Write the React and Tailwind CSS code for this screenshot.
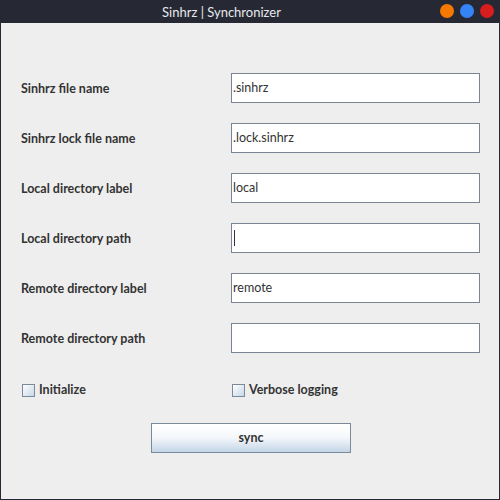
export default function App() {
  const rows = [
    ["Sinhrz file name", ".sinhrz"],
    ["Sinhrz lock file name", ".lock.sinhrz"],
    ["Local directory label", "local"],
    ["Local directory path", "", true],
    ["Remote directory label", "remote"],
    ["Remote directory path", ""],
  ];
  const font = { fontFamily: 'Lato, "Noto Sans", sans-serif' };
  return (
    <div className="w-[500px] h-[500px] flex flex-col bg-[#262833]" style={font}>
      <div className="h-[23px] flex items-center relative rounded-t-[6px] bg-[#262833]">
        <div className="w-[443px] text-center text-[13px] text-[#e6e8ee] leading-none pt-[1px]">
          Sinhrz | Synchronizer
        </div>
        <div className="absolute right-[6px] top-[4px] flex gap-[6px]">
          <div className="w-[14px] h-[14px] rounded-full bg-[#f57900]" />
          <div className="w-[14px] h-[14px] rounded-full bg-[#3584f6]" />
          <div className="w-[14px] h-[14px] rounded-full bg-[#d71d1d]" />
        </div>
      </div>
      <div className="flex-1 mx-[1px] mb-[1px] bg-[#eeeeee] flex flex-col pt-[50px] pl-[20px] pr-[19px]">
        <div className="flex flex-col gap-[20px]">
          {rows.map(([label, value, caret]) => (
            <div key={label} className="flex items-center h-[30px]">
              <div className="w-[210px] text-[12.5px] font-bold text-[#333333] pt-[3px]">{label}</div>
              <div className="w-[249px] h-[30px] bg-white border border-[#7a8593] flex items-center pl-[1px] text-[12.5px] text-[#333333]">
                {caret ? <span className="inline-block w-[1px] h-[16px] bg-[#333333] ml-[1px]" /> : value}
              </div>
            </div>
          ))}
        </div>
        <div className="flex items-center h-[20px] mt-[27px]">
          <div className="w-[211px] flex items-center pl-[1px]">
            <div className="w-[13px] h-[13px] border border-[#7a8a99] bg-gradient-to-br from-[#ffffff] to-[#c8d7e6]" />
            <span className="ml-[4px] text-[12.5px] font-bold text-[#333333]">Initialize</span>
          </div>
          <div className="flex items-center">
            <div className="w-[13px] h-[13px] border border-[#7a8a99] bg-gradient-to-br from-[#ffffff] to-[#c8d7e6]" />
            <span className="ml-[4px] text-[12.5px] font-bold text-[#333333]">Verbose logging</span>
          </div>
        </div>
        <div className="flex justify-start mt-[23px] pl-[130px]">
          <div className="w-[200px] h-[30px] border border-[#7a8a99] bg-gradient-to-b from-[#ffffff] via-[#f4f7fb] to-[#c3d5e7] flex items-center justify-center pt-[1px] text-[12.5px] font-bold text-[#333333]">
            sync
          </div>
        </div>
      </div>
    </div>
  );
}
